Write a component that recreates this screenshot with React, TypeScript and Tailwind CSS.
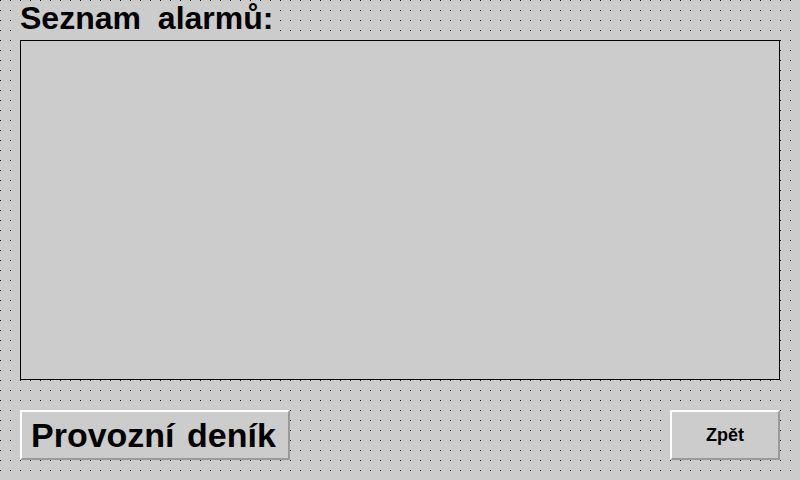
export default function App() {
    return (
        <div
            className="w-[800px] h-[480px] overflow-hidden bg-[#cccccc] bg-[radial-gradient(circle_at_0.5px_0.5px,#000_0.6px,transparent_0.8px)] bg-[size:10px_10px] px-[20px] text-black"
            style={{ fontFamily: '"Liberation Sans", Arial, sans-serif' }}
        >
            {/* Title */}
            <div className="h-[40px] pt-[2px]">
                <h1 className="text-[32px] leading-[32px] font-bold [word-spacing:8px] bg-[#cccccc] inline-block">
                    Seznam alarmů:
                </h1>
            </div>

            {/* Alarm list */}
            <div className="h-[340px] border border-black bg-[#cccccc]" />

            {/* Bottom buttons */}
            <div className="mt-[30px] h-[50px] flex justify-between">
                <button className="w-[270px] h-[50px] flex items-center pl-[9px] bg-[#cccccc] border-2 border-t-white border-l-white border-b-[#999999] border-r-[#999999] text-[34px] font-bold leading-none [word-spacing:3px]">
                    Provozní deník
                </button>
                <button className="w-[110px] h-[50px] flex items-center justify-center bg-[#cccccc] border-2 border-t-white border-l-white border-b-[#999999] border-r-[#999999] text-[18px] font-bold leading-none">
                    Zpět
                </button>
            </div>
        </div>
    );
}
